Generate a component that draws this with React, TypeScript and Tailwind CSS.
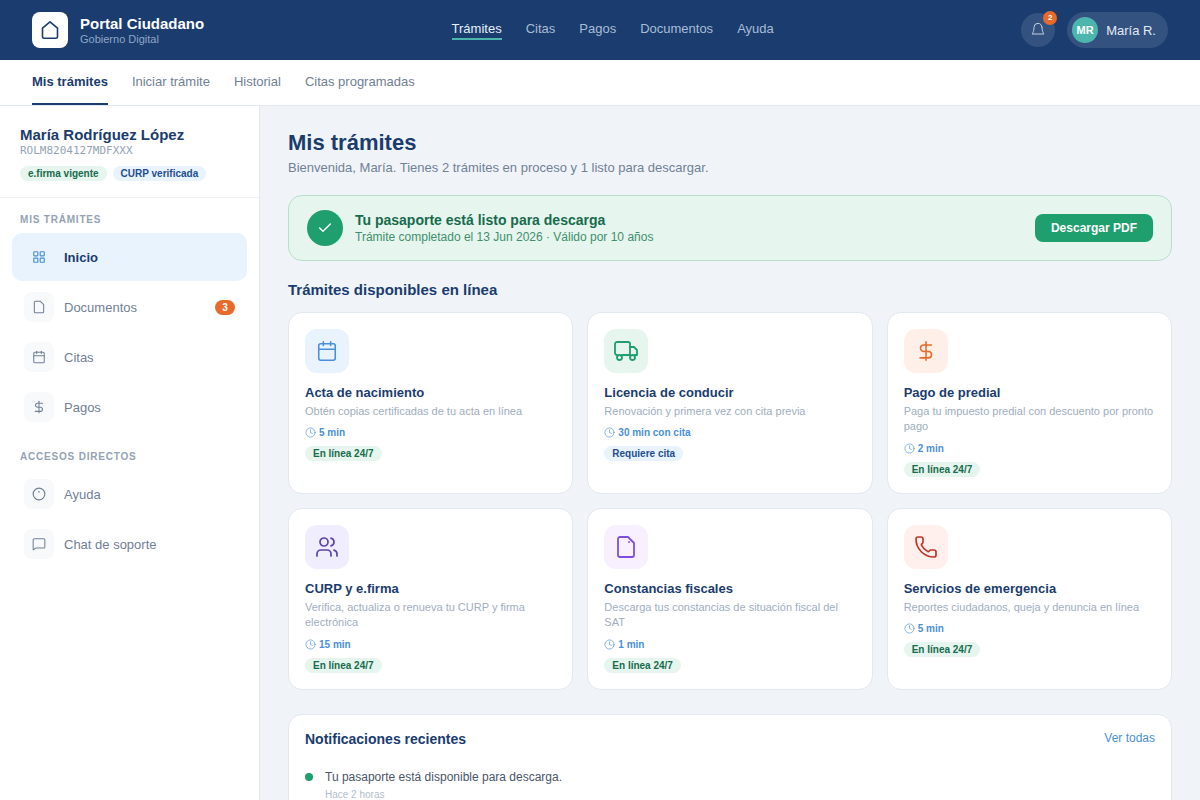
import type { ReactNode } from 'react';
import { Calendar, Check, Clock, LayoutGrid, MessageSquare, Phone, Users } from 'lucide-react';

const topLinks = ['Citas', 'Pagos', 'Documentos', 'Ayuda'];
const subLinks = ['Iniciar trámite', 'Historial', 'Citas programadas'];

const HomeIcon = () => (
  <svg width="20" height="20" viewBox="0 0 20 20" fill="none" stroke="#1a3c6e" strokeWidth="1.6" strokeLinejoin="round">
    <path d="M2.5 8.2 10 1.8l7.5 6.4v8.5a1.5 1.5 0 0 1-1.5 1.5H4a1.5 1.5 0 0 1-1.5-1.5z" />
  </svg>
);

const BellIcon = () => (
  <svg width="16" height="16" viewBox="0 0 24 24" fill="none" stroke="#c3d0e0" strokeWidth="1.5" strokeLinecap="round" strokeLinejoin="round">
    <path d="M18 8a6 6 0 0 0-12 0c0 7-3 10-3 10h18s-3-3-3-10" />
  </svg>
);

const DocIcon = ({ size, color, width, dot }: { size: number; color: string; width: number; dot?: boolean }) => (
  <svg width={size} height={size} viewBox="0 0 24 24" fill="none" stroke={color} strokeWidth={width} strokeLinecap="round" strokeLinejoin="round">
    <path d="M14 2H6a2 2 0 0 0-2 2v16a2 2 0 0 0 2 2h12a2 2 0 0 0 2-2V8z" />
    {dot && <path d="M15 7h.01" />}
  </svg>
);

const DollarIcon = ({ size, color, width }: { size: number; color: string; width: number }) => (
  <svg width={size} height={size} viewBox="0 0 24 24" fill="none" stroke={color} strokeWidth={width} strokeLinecap="round" strokeLinejoin="round">
    <path d="M12 2v20" />
    <path d="M18 5.5H9.5a3.5 3.5 0 0 0 0 7h5a3.5 3.5 0 0 1 0 7H5.5" />
  </svg>
);

const TruckIcon = () => (
  <svg width="24" height="24" viewBox="0 0 24 24" fill="none" stroke="#1f9e6e" strokeWidth="1.8" strokeLinecap="round" strokeLinejoin="round">
    <path d="M3 16a2 2 0 0 1-2-2V5a2 2 0 0 1 2-2h11a2 2 0 0 1 2 2v11H8" />
    <path d="M16 8h4l3 3v5h-2" />
    <circle cx="5.5" cy="18.5" r="2.5" />
    <circle cx="18.5" cy="18.5" r="2.5" />
  </svg>
);

const HelpIcon = () => (
  <svg width="14" height="14" viewBox="0 0 24 24" fill="none" stroke="#718096" strokeWidth="2" strokeLinecap="round">
    <circle cx="12" cy="12" r="10" />
    <path d="M12 7.5v1.5" />
  </svg>
);

const NavItem = ({ icon, label, badge, active }: { icon: ReactNode; label: string; badge?: string; active?: boolean }) => (
  <div className={`flex h-[48px] items-center gap-[10px] rounded-[10px] px-3 text-[13px] ${active ? 'bg-[#e8f3fe] font-bold text-[#1a3c6e]' : 'text-[#718096]'}`}>
    <span className={`flex h-[30px] w-[30px] items-center justify-center rounded-lg ${active ? '' : 'bg-[#f7f9fb]'}`}>{icon}</span>
    <span className="flex-1 pt-[2px]">{label}</span>
    {badge && (
      <span className="flex h-[15px] w-5 items-center justify-center rounded-full bg-[#e8692a] text-[10px] font-bold text-white">{badge}</span>
    )}
  </div>
);

const Card = ({ icon, tint, title, desc, time, tag, blue }: { icon: ReactNode; tint: string; title: string; desc: string; time: string; tag: string; blue?: boolean }) => (
  <div className="rounded-[14px] border border-[#e2e8f0] bg-white p-4">
    <div className={`flex h-11 w-11 items-center justify-center rounded-xl ${tint}`}>{icon}</div>
    <h3 className="mt-3 text-[13px] leading-[16px] font-bold text-[#1a3c6e]">{title}</h3>
    <p className="mt-[3px] text-[11px] leading-[15.4px] text-[#a0aec0]">{desc}</p>
    <div className="mt-[6px] flex h-[15px] items-center gap-[3px] text-[10px] font-bold text-[#4a90d9]">
      <Clock size={11} strokeWidth={1.4} />
      {time}
    </div>
    <span className={`mt-[3px] inline-flex h-[15px] items-center rounded-full px-2 text-[10px] font-bold ${blue ? 'bg-[#e8f3fe] text-[#1f4f8f]' : 'bg-[#e6f5ee] text-[#176b4d]'}`}>{tag}</span>
  </div>
);

export default function App() {
  return (
    <div className="flex h-screen flex-col overflow-hidden bg-[#f0f4f8] font-['Liberation_Sans',Arial,sans-serif]">
      <header className="flex h-[60px] shrink-0 items-center justify-between bg-[#1a3c6e] px-8">
        <div className="flex items-center gap-3">
          <div className="flex h-9 w-9 items-center justify-center rounded-lg bg-white"><HomeIcon /></div>
          <div>
            <div className="text-[15px] leading-[18px] font-bold text-white">Portal Ciudadano</div>
            <div className="text-[11px] leading-[13px] text-[#8fa6c6]">Gobierno Digital</div>
          </div>
        </div>
        <nav className="flex items-center gap-6 text-[13px] leading-[18px] text-[#a9bcd6]">
          <span className="border-b-2 border-[#4db6ac] text-[#e8f0fa]">Trámites</span>
          {topLinks.map((link) => (
            <span key={link} className="border-b-2 border-transparent">{link}</span>
          ))}
        </nav>
        <div className="flex items-center gap-3">
          <div className="relative flex h-[34px] w-[34px] items-center justify-center rounded-full bg-[#34527f]">
            <BellIcon />
            <span className="absolute -top-[2px] -right-[2px] flex h-[14px] w-[14px] items-center justify-center rounded-full bg-[#e8692a] text-[8px] font-bold text-white">2</span>
          </div>
          <div className="flex h-9 items-center gap-2 rounded-full bg-[#34527f] pr-3 pl-[5px]">
            <span className="flex h-[26px] w-[26px] items-center justify-center rounded-full bg-[#4db6ac] text-[11px] font-bold text-white">MR</span>
            <span className="pt-[2px] text-[13px] text-[#e2eaf5]">María R.</span>
          </div>
        </div>
      </header>

      <div className="flex h-[46px] shrink-0 items-stretch gap-6 border-b border-[#e2e8f0] bg-white px-8 text-[13px] text-[#718096]">
        <span className="flex items-center border-b-2 border-[#1a3c6e] font-bold text-[#1a3c6e]">Mis trámites</span>
        {subLinks.map((link) => (
          <span key={link} className="flex items-center border-b-2 border-transparent">{link}</span>
        ))}
      </div>

      <div className="flex min-h-0 flex-1">
        <aside className="w-[260px] shrink-0 border-r border-[#e2e8f0] bg-white">
          <div className="h-[92px] border-b border-[#edf0f4] px-5 pt-5">
            <div className="text-[15px] leading-[18px] font-bold text-[#1a3c6e]">María Rodríguez López</div>
            <div className="font-['DejaVu_Sans_Mono',monospace] text-[11px] leading-[14px] text-[#94a3b3]">ROLM8204127MDFXXX</div>
            <div className="mt-2 flex gap-[6px] text-[10px] font-bold">
              <span className="flex h-[15px] items-center rounded-full bg-[#e6f5ee] px-2 text-[#176b4d]">e.firma vigente</span>
              <span className="flex h-[15px] items-center rounded-full bg-[#e8f3fe] px-2 text-[#1f4f8f]">CURP verificada</span>
            </div>
          </div>
          <div className="px-3">
            <div className="mt-[16px] mb-[7px] px-2 text-[10px] leading-[12px] font-bold tracking-[0.8px] text-[#94a3b3]">MIS TRÁMITES</div>
            <div className="flex flex-col gap-[2px]">
              <NavItem active label="Inicio" icon={<LayoutGrid size={14} strokeWidth={2} className="text-[#4a90d9]" />} />
              <NavItem label="Documentos" badge="3" icon={<DocIcon size={14} color="#718096" width={1.8} />} />
              <NavItem label="Citas" icon={<Calendar size={14} strokeWidth={1.8} className="text-[#718096]" />} />
              <NavItem label="Pagos" icon={<DollarIcon size={14} color="#718096" width={1.8} />} />
            </div>
            <div className="mt-[20px] mb-[7px] px-2 text-[10px] leading-[12px] font-bold tracking-[0.8px] text-[#94a3b3]">ACCESOS DIRECTOS</div>
            <div className="flex flex-col gap-[2px]">
              <NavItem label="Ayuda" icon={<HelpIcon />} />
              <NavItem label="Chat de soporte" icon={<MessageSquare size={14} strokeWidth={1.8} className="text-[#718096]" />} />
            </div>
          </div>
        </aside>

        <main className="min-w-0 flex-1 px-7 pt-6">
          <h1 className="text-[22px] leading-[26px] font-bold text-[#1a3c6e]">Mis trámites</h1>
          <p className="mt-[4px] text-[13px] leading-[16px] text-[#718096]">Bienvenida, María. Tienes 2 trámites en proceso y 1 listo para descargar.</p>

          <div className="mt-[19px] flex h-[66px] items-center gap-3 rounded-[14px] border border-[#b7dfc9] bg-[#e6f5ee] px-[18px]">
            <span className="flex h-9 w-9 items-center justify-center rounded-full bg-[#1f9e6e]"><Check size={16} strokeWidth={2.2} className="text-white" /></span>
            <div className="flex-1">
              <div className="text-[14px] leading-[16px] font-bold text-[#176b4d]">Tu pasaporte está listo para descarga</div>
              <div className="mt-[2px] text-[12px] leading-[15px] text-[#3f8f6c]">Trámite completado el 13 Jun 2026 · Válido por 10 años</div>
            </div>
            <button className="h-[28px] rounded-lg bg-[#1f9e6e] px-4 text-[12px] font-bold text-white">Descargar PDF</button>
          </div>

          <h2 className="mt-[20px] mb-[13px] text-[15px] leading-[18px] font-bold text-[#1a3c6e]">Trámites disponibles en línea</h2>

          <div className="grid grid-cols-3 grid-rows-[182px_182px] gap-[14px]">
            <Card tint="bg-[#e8f3fe]" title="Acta de nacimiento" desc="Obtén copias certificadas de tu acta en línea" time="5 min" tag="En línea 24/7" icon={<Calendar size={22} strokeWidth={1.7} className="text-[#4a90d9]" />} />
            <Card tint="bg-[#e6f5ee]" title="Licencia de conducir" desc="Renovación y primera vez con cita previa" time="30 min con cita" tag="Requiere cita" blue icon={<TruckIcon />} />
            <Card tint="bg-[#fef0e8]" title="Pago de predial" desc="Paga tu impuesto predial con descuento por pronto pago" time="2 min" tag="En línea 24/7" icon={<DollarIcon size={22} color="#e8692a" width={1.7} />} />
            <Card tint="bg-[#f0edfe]" title="CURP y e.firma" desc="Verifica, actualiza o renueva tu CURP y firma electrónica" time="15 min" tag="En línea 24/7" icon={<Users size={24} strokeWidth={1.7} className="text-[#5b45a8]" />} />
            <Card tint="bg-[#f9f0ff]" title="Constancias fiscales" desc="Descarga tus constancias de situación fiscal del SAT" time="1 min" tag="En línea 24/7" icon={<DocIcon size={24} color="#7c4fe0" width={1.8} dot />} />
            <Card tint="bg-[#fff0ee]" title="Servicios de emergencia" desc="Reportes ciudadanos, queja y denuncia en línea" time="5 min" tag="En línea 24/7" icon={<Phone size={24} strokeWidth={1.7} className="text-[#c0392b]" />} />
          </div>

          <section className="mt-6 rounded-[14px] border border-[#e2e8f0] bg-white p-4">
            <div className="flex items-start justify-between">
              <h2 className="text-[14px] leading-[17px] font-bold text-[#1a3c6e]">Notificaciones recientes</h2>
              <span className="text-[12px] leading-[14px] text-[#4a90d9]">Ver todas</span>
            </div>
            <div className="mt-[22px] flex gap-3">
              <span className="mt-[3px] h-2 w-2 shrink-0 rounded-full bg-[#1f9e6e]" />
              <div>
                <div className="text-[12px] leading-[15px] text-[#4a5568]">Tu pasaporte está disponible para descarga.</div>
                <div className="mt-[4px] text-[10px] leading-[12px] text-[#b4bfcc]">Hace 2 horas</div>
              </div>
            </div>
          </section>
        </main>
      </div>
    </div>
  );
}
